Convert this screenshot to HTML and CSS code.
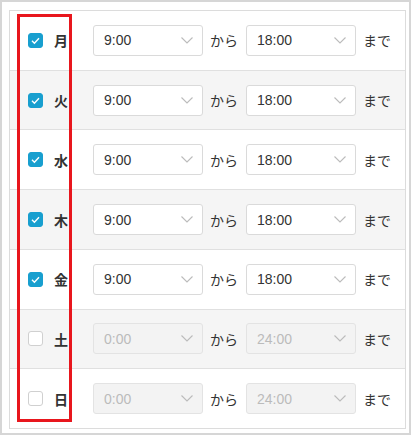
FILE: index.html
```html
<!DOCTYPE html>
<html lang="ja">
<head>
<meta charset="utf-8">
<link rel="stylesheet" href="styles.css">
</head>
<body>
<div class="frame">
  <div class="table">
    <div class="row">
      <span class="cb on"><svg viewBox="0 0 15 15" width="15" height="15"><polyline points="4,7.8 6.4,10.2 11,5.2" fill="none" stroke="#fff" stroke-width="1.4"/></svg></span>
      <span class="day">月</span>
      <span class="sel"><span>9:00</span><svg width="12" height="7" viewBox="0 0 12 7"><polyline points="0.5,0.5 6,6 11.5,0.5" fill="none" stroke="#bbb" stroke-width="1.1"/></svg></span>
      <span class="sep">から</span>
      <span class="sel"><span>18:00</span><svg width="12" height="7" viewBox="0 0 12 7"><polyline points="0.5,0.5 6,6 11.5,0.5" fill="none" stroke="#bbb" stroke-width="1.1"/></svg></span>
      <span class="end">まで</span>
    </div>
    <div class="row alt">
      <span class="cb on"><svg viewBox="0 0 15 15" width="15" height="15"><polyline points="4,7.8 6.4,10.2 11,5.2" fill="none" stroke="#fff" stroke-width="1.4"/></svg></span>
      <span class="day">火</span>
      <span class="sel"><span>9:00</span><svg width="12" height="7" viewBox="0 0 12 7"><polyline points="0.5,0.5 6,6 11.5,0.5" fill="none" stroke="#bbb" stroke-width="1.1"/></svg></span>
      <span class="sep">から</span>
      <span class="sel"><span>18:00</span><svg width="12" height="7" viewBox="0 0 12 7"><polyline points="0.5,0.5 6,6 11.5,0.5" fill="none" stroke="#bbb" stroke-width="1.1"/></svg></span>
      <span class="end">まで</span>
    </div>
    <div class="row">
      <span class="cb on"><svg viewBox="0 0 15 15" width="15" height="15"><polyline points="4,7.8 6.4,10.2 11,5.2" fill="none" stroke="#fff" stroke-width="1.4"/></svg></span>
      <span class="day">水</span>
      <span class="sel"><span>9:00</span><svg width="12" height="7" viewBox="0 0 12 7"><polyline points="0.5,0.5 6,6 11.5,0.5" fill="none" stroke="#bbb" stroke-width="1.1"/></svg></span>
      <span class="sep">から</span>
      <span class="sel"><span>18:00</span><svg width="12" height="7" viewBox="0 0 12 7"><polyline points="0.5,0.5 6,6 11.5,0.5" fill="none" stroke="#bbb" stroke-width="1.1"/></svg></span>
      <span class="end">まで</span>
    </div>
    <div class="row alt">
      <span class="cb on"><svg viewBox="0 0 15 15" width="15" height="15"><polyline points="4,7.8 6.4,10.2 11,5.2" fill="none" stroke="#fff" stroke-width="1.4"/></svg></span>
      <span class="day">木</span>
      <span class="sel"><span>9:00</span><svg width="12" height="7" viewBox="0 0 12 7"><polyline points="0.5,0.5 6,6 11.5,0.5" fill="none" stroke="#bbb" stroke-width="1.1"/></svg></span>
      <span class="sep">から</span>
      <span class="sel"><span>18:00</span><svg width="12" height="7" viewBox="0 0 12 7"><polyline points="0.5,0.5 6,6 11.5,0.5" fill="none" stroke="#bbb" stroke-width="1.1"/></svg></span>
      <span class="end">まで</span>
    </div>
    <div class="row">
      <span class="cb on"><svg viewBox="0 0 15 15" width="15" height="15"><polyline points="4,7.8 6.4,10.2 11,5.2" fill="none" stroke="#fff" stroke-width="1.4"/></svg></span>
      <span class="day">金</span>
      <span class="sel"><span>9:00</span><svg width="12" height="7" viewBox="0 0 12 7"><polyline points="0.5,0.5 6,6 11.5,0.5" fill="none" stroke="#bbb" stroke-width="1.1"/></svg></span>
      <span class="sep">から</span>
      <span class="sel"><span>18:00</span><svg width="12" height="7" viewBox="0 0 12 7"><polyline points="0.5,0.5 6,6 11.5,0.5" fill="none" stroke="#bbb" stroke-width="1.1"/></svg></span>
      <span class="end">まで</span>
    </div>
    <div class="row alt">
      <span class="cb"></span>
      <span class="day">土</span>
      <span class="sel off"><span>0:00</span><svg width="12" height="7" viewBox="0 0 12 7"><polyline points="0.5,0.5 6,6 11.5,0.5" fill="none" stroke="#bbb" stroke-width="1.1"/></svg></span>
      <span class="sep">から</span>
      <span class="sel off"><span>24:00</span><svg width="12" height="7" viewBox="0 0 12 7"><polyline points="0.5,0.5 6,6 11.5,0.5" fill="none" stroke="#bbb" stroke-width="1.1"/></svg></span>
      <span class="end">まで</span>
    </div>
    <div class="row">
      <span class="cb"></span>
      <span class="day">日</span>
      <span class="sel off"><span>0:00</span><svg width="12" height="7" viewBox="0 0 12 7"><polyline points="0.5,0.5 6,6 11.5,0.5" fill="none" stroke="#bbb" stroke-width="1.1"/></svg></span>
      <span class="sep">から</span>
      <span class="sel off"><span>24:00</span><svg width="12" height="7" viewBox="0 0 12 7"><polyline points="0.5,0.5 6,6 11.5,0.5" fill="none" stroke="#bbb" stroke-width="1.1"/></svg></span>
      <span class="end">まで</span>
    </div>
  </div>
  <div class="highlight"></div>
</div>
</body>
</html>
```

FILE: styles.css
```css
html, body {
  margin: 0;
  padding: 0;
  background: #fff;
}
.frame {
  position: relative;
  width: 411px;
  height: 435px;
  box-sizing: border-box;
  border: 2px solid #d6d6d6;
  border-left-width: 2px;
  padding: 8px 3px 4px 7px;
  font-family: "Noto Sans CJK JP", "Liberation Sans", sans-serif;
  color: #333;
}
.table {
  height: 419px;
  box-sizing: border-box;
  border: 1px solid #dcdcdc;
  display: flex;
  flex-direction: column;
}
.row {
  flex: 1;
  display: flex;
  align-items: center;
  padding-left: 18px;
  border-bottom: 1px solid #e0e0e0;
  background: #fff;
}
.row:last-child {
  border-bottom: none;
}
.row.alt {
  background: #f5f5f5;
}
.cb {
  width: 15px;
  height: 15px;
  box-sizing: border-box;
  border: 1px solid #d0d0d0;
  border-radius: 3px;
  background: #fff;
  display: flex;
  flex: none;
}
.cb.on {
  background: #189fcf;
  border-color: #189fcf;
}
.cb svg {
  margin: -1px;
}
.day {
  margin-left: 11px;
  width: 14px;
  font-size: 14px;
  font-weight: bold;
  line-height: 1;
}
.sel {
  margin-left: 25px;
  width: 110px;
  height: 31px;
  box-sizing: border-box;
  border: 1px solid #dadada;
  border-radius: 3px;
  background: #fff;
  display: flex;
  align-items: center;
  justify-content: space-between;
  padding: 0 9px 0 10px;
  font-family: "Liberation Sans", Arial, sans-serif;
  font-size: 14px;
  color: #333;
  flex: none;
}
.sel + .sep + .sel {
  margin-left: 0;
}
.sel.off {
  background: #f3f3f3;
  border-color: #e3e3e3;
  color: #bbb;
}
.sep {
  margin: 0 8px 0 7px;
  font-size: 14px;
  line-height: 1;
}
.end {
  margin-left: 7px;
  font-size: 14px;
  line-height: 1;
}
.highlight {
  position: absolute;
  left: 15px;
  top: 12px;
  width: 55px;
  height: 408px;
  box-sizing: border-box;
  border: 3px solid #e8161d;
}
```
